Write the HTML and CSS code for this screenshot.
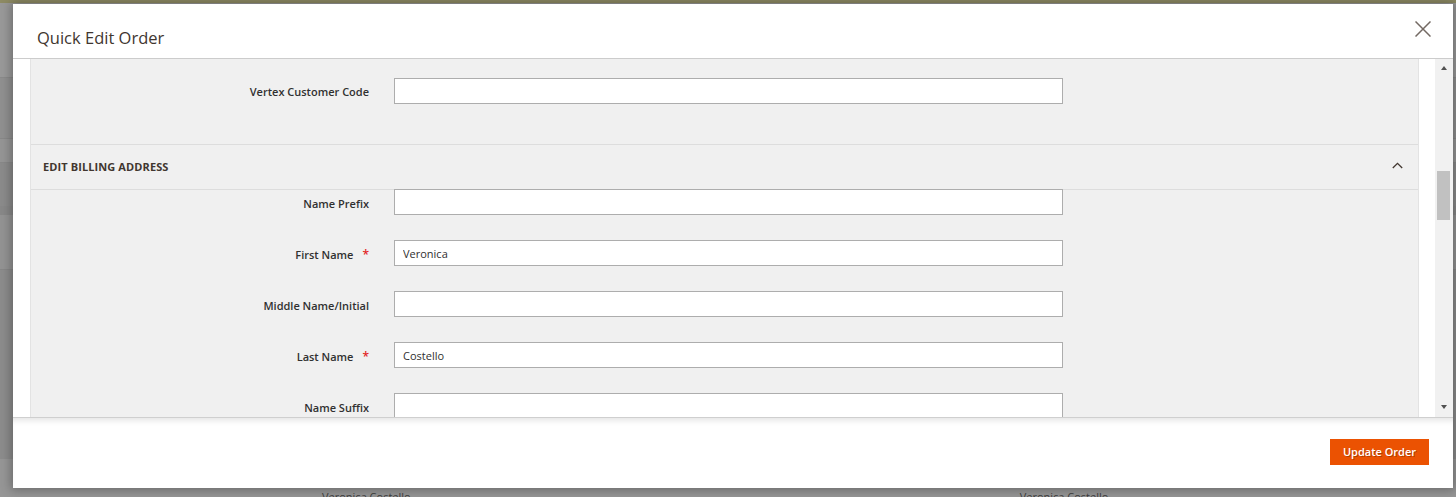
FILE: index.html
```html
<!DOCTYPE html>
<html lang="en">
<head>
<meta charset="utf-8">
<title>Quick Edit Order</title>
<link rel="stylesheet" href="styles.css">
</head>
<body>
<div class="backdrop">
  <div class="band band-top"></div>
  <div class="band band-1"></div>
  <div class="band band-2"></div>
  <div class="band band-3"></div>
  <div class="band band-4"></div>
  <div class="band band-5"></div>
  <div class="band band-6"></div>
  <div class="band band-7"></div>
  <div class="band band-8">
    <span class="bg-name bg-name-1">Veronica Costello</span>
    <span class="bg-name bg-name-2">Veronica Costello</span>
  </div>
</div>

<div class="modal">
  <header class="modal-header">
    <h1 class="modal-title">Quick Edit Order</h1>
    <button class="close" type="button" aria-label="Close">
      <svg width="16" height="16" viewBox="0 0 16 16"><path d="M0.5 0.5 L15.5 15.5 M15.5 0.5 L0.5 15.5" stroke="#736963" stroke-width="1.5" fill="none"/></svg>
    </button>
  </header>

  <div class="modal-body">
    <div class="gutter-left"></div>
    <div class="panel">
      <div class="fieldset fieldset-top">
        <div class="field">
          <label class="label">Vertex Customer Code</label>
          <input class="input" type="text" value="">
        </div>
      </div>

      <div class="section-title">
        <span>Edit Billing Address</span>
        <svg class="chevron" width="11" height="7" viewBox="0 0 11 7"><path d="M0.8 6 L5.5 1.3 L10.2 6" stroke="#41362f" stroke-width="1.3" fill="none"/></svg>
      </div>

      <div class="fieldset fieldset-billing">
        <div class="field">
          <label class="label">Name Prefix</label>
          <input class="input" type="text" value="">
        </div>
        <div class="field">
          <label class="label required">First Name</label>
          <input class="input" type="text" value="Veronica">
        </div>
        <div class="field">
          <label class="label">Middle Name/Initial</label>
          <input class="input" type="text" value="">
        </div>
        <div class="field">
          <label class="label required">Last Name</label>
          <input class="input" type="text" value="Costello">
        </div>
        <div class="field">
          <label class="label">Name Suffix</label>
          <input class="input" type="text" value="">
        </div>
      </div>
    </div>
    <div class="gutter-right"></div>
    <div class="scrollbar">
      <div class="arrow arrow-up"></div>
      <div class="track"><div class="thumb"></div></div>
      <div class="arrow arrow-down"></div>
    </div>
  </div>

  <footer class="modal-footer">
    <button class="btn-primary" type="button">Update Order</button>
  </footer>
</div>
</body>
</html>
```

FILE: styles.css
```css
* { box-sizing: border-box; }

html, body {
  margin: 0;
  padding: 0;
  width: 1456px;
  height: 497px;
  overflow: hidden;
}

body {
  background: #8e8e8e;
  font-family: "Open Sans", "Noto Sans", "Liberation Sans", sans-serif;
  position: relative;
}

/* underlying page seen through the overlay */
.backdrop {
  display: flex;
  flex-direction: column;
  width: 100%;
  height: 100%;
}
.band { width: 100%; flex: none; }
.band-top { height: 3px; background: #8e8b64; }
.band-1 { height: 75px; background: #999999; border-bottom: 1px solid #8a8a8a; }
.band-2 { height: 61px; background: #909090; border-bottom: 1px solid #888; }
.band-3 { height: 24px; background: #959595; border-bottom: 1px solid #888; }
.band-4 { height: 43px; background: #8b8b8b; }
.band-5 { height: 9px; background: #888888; }
.band-6 { height: 55px; background: #939393; border-bottom: 1px solid #878787; }
.band-7 { height: 189px; background: #8c8c8c; }
.band-8 {
  flex: 1;
  background: #969696;
  display: flex;
  padding-top: 30px;
  font-size: 11px;
  line-height: 15px;
  color: #3e3e3e;
  white-space: nowrap;
}
.bg-name-1 { margin-left: 322px; }
.bg-name-2 { margin-left: 609px; }

/* modal overlay */
.modal {
  position: absolute;
  left: 13px;
  top: 4px;
  width: 1440px;
  height: 484px;
  background: #fff;
  display: flex;
  flex-direction: column;
  box-shadow: 0 0 10px 2px rgba(0, 0, 0, 0.3);
}

.modal-header {
  height: 55px;
  border-bottom: 1px solid #cccccc;
  display: flex;
  align-items: flex-start;
  justify-content: space-between;
  padding: 0 22px 0 24px;
  flex: none;
}
.modal-title {
  margin: 23px 0 0;
  font-size: 16.5px;
  font-weight: 400;
  color: #41362f;
  line-height: 22px;
}
.close {
  margin-top: 17px;
  width: 16px;
  height: 16px;
  padding: 0;
  border: 0;
  background: none;
  display: block;
}
.close svg { display: block; }

.modal-body {
  height: 358px;
  display: flex;
  flex: none;
}
.gutter-left { width: 17px; flex: none; background: #fff; }
.gutter-right { width: 16px; flex: none; background: #fff; }

.panel {
  flex: 1;
  background: #f0f0f0;
  border-left: 1px solid #e3e3e3;
  border-right: 1px solid #e3e3e3;
  overflow: hidden;
}

.fieldset-top {
  padding-top: 19px;
  padding-bottom: 40px;
}
.fieldset-billing {
  margin-top: -1px;
}

.field {
  display: flex;
  align-items: center;
  margin-bottom: 25px;
}
.fieldset-top .field { margin-bottom: 0; }

.label {
  width: 338px;
  flex: none;
  text-align: right;
  font-size: 11px;
  font-weight: 600;
  color: #303030;
  line-height: 14px;
  padding-top: 3px;
}
.fieldset-top .label { padding-top: 2px; }
.label.required::after {
  content: "*";
  color: #e22626;
  margin-left: 9px;
  font-size: 12px;
}

.input {
  margin: 0 0 0 25px;
  width: 669px;
  height: 26px;
  border: 1px solid #adadad;
  background: #fff;
  padding: 0 8px;
  font-family: inherit;
  font-size: 11px;
  color: #303030;
  outline: none;
}

.section-title {
  height: 46px;
  border-top: 1px solid #dddddd;
  border-bottom: 1px solid #dddddd;
  display: flex;
  align-items: center;
  justify-content: space-between;
  padding: 0 15px 2px 12px;
  font-size: 11px;
  font-weight: 700;
  color: #41362f;
  text-transform: uppercase;
  letter-spacing: 0.1px;
}
.chevron { display: block; margin-top: -1px; }

/* scrollbar */
.scrollbar {
  width: 18px;
  flex: none;
  background: #f1f1f1;
  display: flex;
  flex-direction: column;
  align-items: center;
}
.arrow {
  width: 0;
  height: 0;
  border-left: 3.5px solid transparent;
  border-right: 3.5px solid transparent;
  flex: none;
}
.arrow-up {
  margin-top: 7px;
  border-bottom: 4px solid #505050;
}
.arrow-down {
  margin-bottom: 8px;
  border-top: 4px solid #505050;
}
.track {
  flex: 1;
  width: 100%;
  padding: 101px 2px 0 2px;
}
.thumb {
  width: 13px;
  height: 49px;
  background: #c1c1c1;
}

.modal-footer {
  flex: 1;
  border-top: 1px solid #cfcfcf;
  box-shadow: inset 0 6px 6px -4px rgba(0, 0, 0, 0.12);
  display: flex;
  justify-content: flex-end;
  align-items: flex-start;
  padding: 21px 24px 0 0;
}
.btn-primary {
  width: 99px;
  height: 26px;
  background: #eb5202;
  border: 1px solid #eb5202;
  color: #fff;
  font-family: inherit;
  font-size: 11px;
  font-weight: 600;
  text-shadow: 1px 1px 0 rgba(0, 0, 0, 0.25);
  padding: 0 0 2px;
  cursor: pointer;
}
```
